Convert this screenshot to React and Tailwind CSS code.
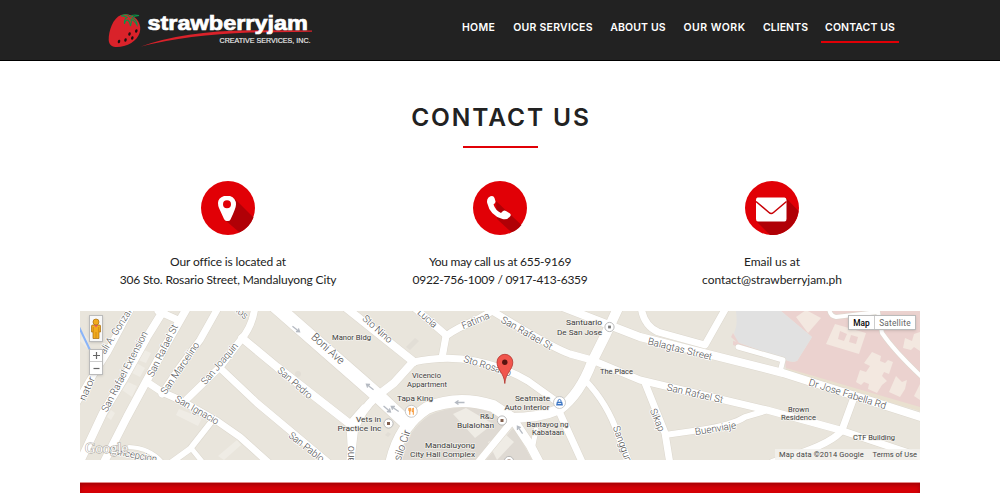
import React from "react";

const NAV = [
  { label: "HOME", box: "w-[43px]", track: "tracking-[0.3px]" },
  { label: "OUR SERVICES", box: "w-[88px]", track: "tracking-[0.25px]" },
  { label: "ABOUT US", box: "w-[64px]", track: "tracking-[0.15px]" },
  { label: "OUR WORK", box: "w-[71px]", track: "tracking-[0.5px]" },
  { label: "CLIENTS", box: "w-[53px]", track: "tracking-[0.05px]" },
  { label: "CONTACT US", box: "w-[78px]", track: "tracking-[0.1px]", active: true },
];

// [path, width]
const ROADS = [
  ["M131 308L107 353L90 380L76 404", 7],
  ["M165 308L147 337L123 380L103 413L79 464", 8],
  ["M187 308L167 343L147 380L127 417L103 464", 8],
  ["M158 311L178 320", 7],
  ["M218 308L200 340L180 367L162 394", 7],
  ["M255 306Q253 326 240 341L220 367L187 399", 7],
  ["M147 382L162 392L180 400L217 421L240 437L270 464", 7],
  ["M212 421L190 449L172 462", 6],
  ["M191 448L204 464", 5],
  ["M129 447Q150 448 162 462", 4],
  ["M242 338L277 367L350 424", 8],
  ["M220 368L257 403L330 464", 7],
  ["M272 303L360 380L377 395L408 424", 14],
  ["M340 303L414 362", 8],
  ["M410 304L446 335", 7],
  ["M446 336Q455 329 478 319L498 308", 7],
  ["M446 336L442 358", 7],
  ["M413 362Q447 355 475 361Q507 368 528 381L556 401", 7],
  ["M413 362L394 383L377 396Q361 410 354 430L350 464", 8],
  ["M364 408L350 424L352 464", 7],
  ["M484 306L522 329Q556 349 570 354L592 360L640 380L767 410L840 430L924 458", 7],
  ["M619 306L606 334L592 362Q580 394 560 409Q540 418 510 418", 10],
  ["M391 464Q399 426 427 408Q458 395 493 406L514 420", 12],
  ["M513 420L477 464", 7],
  ["M512 418L530 445L540 464", 9],
  ["M533 445L536 430", 5],
  ["M558 409L583 464", 7],
  ["M585 380Q608 404 618 435L630 464", 6],
  ["M560 306L640 337L783 373L924 418", 8],
  ["M641 306Q643 325 658 332L705 345L727 306", 7],
  ["M738 347L783 360L780 372", 5],
  ["M645 383L665 433L670 464", 7],
  ["M665 435L700 430Q733 425 745 417L765 411", 6],
  ["M853 400L842 430Q832 445 773 462", 7],
  ["M829 306Q829 316 836 317L878 312L882 333Q895 352 923 378", 4],
];

// [text, x1, y1, x2, y2, size] centre line from first to last letter
const STREETS = [
  ["ali A. Gonzal", 102, 353, 129, 310, 10],
  ["nator", 82, 400, 92, 377, 10],
  ["San Rafael Extension", 104, 411, 145, 332, 10],
  ["San Rafael St", 150, 376, 175, 325, 10],
  ["San Marcelino", 163, 393, 197, 343, 10],
  ["San Joaquin", 203, 383, 236, 344, 10],
  ["San Ignacio", 176, 398, 218, 422, 10],
  ["San Pedro", 279, 369, 311, 397, 10],
  ["San Pablo", 290, 434, 323, 460, 10],
  ["Boni Ave", 313, 335, 343, 362, 11.5],
  ["rios", 235, 307, 247, 317, 10],
  ["Concepcion", 109, 450, 157, 459, 10],
  ["Sto Nino", 364, 317, 391, 341, 10],
  ["Lucia", 419, 311, 436, 326, 10],
  ["Fatima", 462, 326, 489, 315, 10],
  ["San Rafael St", 502, 319, 552, 347, 10],
  ["Sto Rosario", 464, 358.5, 511, 373, 10],
  ["osilo Cir", 395, 466, 407, 430, 11],
  ["ano", 351, 463, 351, 446, 10],
  ["Sanggun", 616, 426, 629, 462, 10],
  ["Balagtas Street", 648, 341, 712, 357, 10],
  ["San Rafael St", 667, 387, 723, 400, 10],
  ["Sikap", 653, 409, 662, 431, 10],
  ["Buenviaje", 695, 432, 736, 425, 10],
  ["Dr Jose Fabella Rd", 809, 382, 886, 406, 10],
];

// [text, x, baseline, width]
const PLACES = [
  ["Manor Bldg", 332, 340, 39],
  ["Vicencio", 412, 378, 29],
  ["Appartment", 407, 386.5, 40],
  ["Tapa King", 397, 401, 36],
  ["Vets in", 356, 422, 25],
  ["Practice Inc", 337.5, 431, 44],
  ["R&J", 480, 419, 14],
  ["Bulalohan", 457, 427.5, 37],
  ["Mandaluyong", 425, 447.5, 50],
  ["City Hall Complex", 410, 456.5, 65],
  ["Seatmate", 515, 400.5, 35],
  ["Auto Interior", 504.5, 409.5, 45],
  ["Bantayog ng", 526.5, 427, 42],
  ["Kabataan", 532, 435, 32],
  ["Santuario", 566, 325, 36],
  ["De San Jose", 557, 335, 45],
  ["The Place", 600, 373.5, 33],
  ["Brown", 788, 411.5, 21],
  ["Residence", 781, 420, 35],
  ["CTF Building", 853, 440, 42],
];

function Street({ item }) {
  const [text, x1, y1, x2, y2, size] = item;
  const angle = (Math.atan2(y2 - y1, x2 - x1) * 180) / Math.PI;
  const length = Math.hypot(x2 - x1, y2 - y1);
  return (
    <text
      transform={`translate(${x1} ${y1}) rotate(${angle})`}
      y={size * 0.34}
      fontSize={size}
      textLength={length}
      lengthAdjust="spacingAndGlyphs"
    >
      {text}
    </text>
  );
}

function Poi({ x, y, children }) {
  return (
    <g transform={`translate(${x} ${y})`}>
      <circle r="4.6" fill="#fff" stroke="#aaa" strokeWidth=".8" />
      {children || <rect x="-1.5" y="-1.5" width="3" height="3" fill="#83614f" />}
    </g>
  );
}

function Arrow({ x, y, angle }) {
  return (
    <path
      transform={`translate(${x} ${y}) rotate(${angle})`}
      d="M-4.5 0H4M1.5 -2L4.5 0L1.5 2"
      fill="none"
      stroke="#b5bac2"
      strokeWidth="1.3"
    />
  );
}

function StreetMap() {
  return (
    <svg className="block h-full w-full" viewBox="80 311 840 149" fontFamily="Roboto, sans-serif">
      <rect x="80" y="311" width="840" height="149" fill="#e9e5dc" />
      <path d="M734 311H920V409L786 371L785 360L733 345Z" fill="#ebd2cf" />
      <path d="M731 311H781L812 337L797 361Q790 363 784 359L731 340Z" fill="#e9e5dc" />
      <path d="M736 311H781L812 337L797 361Q790 363 784 359L737 342L734 333Q738 325 736 311Z" fill="#e1e1e1" />
      <path d="M733 333L731 337L740 345Z" fill="#ebd2cf" />
      <path d="M400 460Q407 430 430 415Q460 402 489 411L509 422L475 460Z" fill="#dfdad3" />
      <path d="M514 427L486 460H532Z" fill="#dfdad3" />
      <g fill="#efece5">
        <path d="M453 414L466 408L493 424L475 438Z" />
        <path d="M488 442L505 434L514 442L497 460Z" />
        <path d="M142 349L151 353L146 363L138 360Z" />
        <path d="M133 361L145 368L140 377L128 371Z" />
        <path d="M128 382L137 386L132 397L122 390Z" />
        <path d="M111 410L115 413L111 420L107 417Z" />
        <path d="M179 409L202 418L198 426L176 415Z" />
        <path d="M218 456L237 440L241 445L224 460Z" />
        <path d="M83 333L89 339L87 348L80 341Z" />
      </g>
      <g fill="#f3e8e0">
        <path d="M796 317L806 310L821 318L808 333Z" />
        <path fillRule="evenodd" d="M835 324L866 333L859 354L826 344ZM840 331L838 339L844 341L847 334ZM851 335L849 342L856 344L858 337Z" />
        <path d="M872 352L881 356L880 361L885 363L888 360L893 362L889 374L884 372L882 376L887 381L882 385L877 393L868 389L869 384L864 382L861 385L856 382L860 370L866 372L870 366L864 363Z" />
        <path d="M896 376L902 382L907 380L905 389L900 397L889 392Z" />
        <path d="M905 338L912 341L914 334L920 332V351L914 347L911 350L903 348Z" />
        <path d="M920 384V400L914 396Z" />
        <path d="M786 368L920 407V411L786 373Z" fill="#e9e0cf" />
      </g>
      <g fill="#e2ded6">
        <path d="M415 338L419 341L410 350L406 347Z" />
        <circle cx="298" cy="374" r="3" />
        <path d="M388 432L391 434L388 437L385 435Z" />
      </g>
      <path d="M79 327L90 350" stroke="#8ab4f8" strokeWidth="2" />
      <g fill="none" strokeLinejoin="round" strokeLinecap="round">
        {ROADS.map(([d, w]) => (
          <path key={d} d={d} stroke="#dcd7cd" strokeWidth={w + 1} />
        ))}
        {ROADS.map(([d, w]) => (
          <path key={d} d={d} stroke="#fff" strokeWidth={w} />
        ))}
      </g>
      <Arrow x={296} y={329} angle={38} />
      <Arrow x={370} y={387} angle={218} />
      <Arrow x={387} y={409} angle={40} />
      <Arrow x={395} y={409} angle={215} />
      <Arrow x={460} y={402.5} angle={180} />
      <Arrow x={520} y={430} angle={235} />
      <g fill="#4c4c4c" fontWeight="300" stroke="#fff" strokeWidth="1.6" paintOrder="stroke" strokeLinejoin="round">
        {STREETS.map((item) => (
          <Street key={item[0] + item[1]} item={item} />
        ))}
      </g>
      <g fill="#3c3c3c" stroke="#f4f2ed" strokeWidth="1.4" paintOrder="stroke" strokeLinejoin="round" fontSize="8" fontWeight="400">
        {PLACES.map(([text, x, y, w]) => (
          <text key={text} x={x} y={y} textLength={w} lengthAdjust="spacingAndGlyphs">
            {text}
          </text>
        ))}
      </g>
      <Poi x={388.5} y={423.5} />
      <Poi x={502} y={420.5} />
      <Poi x={509} y={461} />
      <Poi x={609.5} y={327}>
        <rect x="-1.4" y="-1.4" width="2.8" height="2.8" fill="#777" />
      </Poi>
      <g transform="translate(411.3 411.3)">
        <circle r="6" fill="#fff" stroke="#bbb" strokeWidth=".8" />
        <path d="M-2.4 -3.4V-1Q-2.4 0 -1.5 0V3.5M-.6 -3.4V-1Q-.6 0 -1.5 0M-1.5 -3.4V0M2 3.5V-3.4Q.8 -2.5 .8 .3H2" fill="none" stroke="#f58b1f" strokeWidth=".9" />
      </g>
      <g transform="translate(559.5 402.5)">
        <circle r="6" fill="#fff" stroke="#bbb" strokeWidth=".8" />
        <path d="M-2.7 -.8H2.7L3.4 3H-3.4Z" fill="#3b75c4" />
        <path d="M-1.5 -.6V-2.2Q0 -4 1.5 -2.2V-.6M-1.5 1H1.5" fill="none" stroke="#3b75c4" strokeWidth="1" />
        <path d="M-1.7 1H1.7" stroke="#fff" strokeWidth=".8" />
      </g>
      <path d="M504.800 383.500C504.300 373 497 370 497 362.200A7.900 7.900 0 0 1 512.800 362.200C512.800 370 505.400 373 504.800 383.500Z" fill="#f1554c" stroke="#b3332d" strokeWidth=".8" />
      <circle cx="504.800" cy="362.300" r="2.700" fill="#581410" />
      <text x="85" y="453" fontFamily="Liberation Serif, serif" fontSize="14" fill="#fff" stroke="#aaa69e" strokeWidth="1" paintOrder="stroke" textLength="43" lengthAdjust="spacingAndGlyphs">
        Google
      </text>
    </svg>
  );
}

function Pegman() {
  return (
    <svg className="h-[22px] w-[12px]" viewBox="0 0 12 22">
      <path d="M2.500 7H9.500Q10.500 7 10.500 8V14H9V20.500H3V14H1.500V8Q1.500 7 2.500 7Z" fill="#f2ab1d" stroke="#a66a0c" strokeWidth=".7" />
      <path d="M6 14V20M3.300 9V14M8.700 9V14" stroke="#b97410" strokeWidth=".6" />
      <path d="M4 7H8L6 9.500Z" fill="#e8596a" />
      <circle cx="6" cy="4" r="3" fill="#f2ab1d" stroke="#a66a0c" strokeWidth=".7" />
    </svg>
  );
}

function Logo() {
  return (
    <svg className="h-[61px] w-[212px]" viewBox="104 0 212 61" fontFamily="Liberation Sans, sans-serif">
      <path d="M121 15C129 12 139 17 140.200 27C141 35 135 43 124 46C117 48 109 48 108.700 40C108.500 31 113 18 121 15Z" fill="#d9222a" />
      <path d="M121 16Q127 12.500 130 17Q132 14 139 15.500Q134 16 132 18Q137 20 137 25Q134 20 131 19.500Q132 22 130.500 26Q130 22 128 20Q125 20 124.500 24Q124 19 127 17.500Q124 15.500 121 16Z" fill="none" stroke="#0b9447" strokeWidth="1.100" />
      <g fill="#1b1012">
        <ellipse cx="136.300" cy="31" rx="1.200" ry="1.800" transform="rotate(20 136.300 31)" />
        <ellipse cx="129.500" cy="34" rx="1.200" ry="1.800" transform="rotate(20 129.500 34)" />
        <ellipse cx="132.300" cy="38" rx="1.200" ry="1.800" transform="rotate(20 132.300 38)" />
        <ellipse cx="125.500" cy="40" rx="1.200" ry="1.800" transform="rotate(20 125.500 40)" />
        <ellipse cx="119" cy="41.500" rx="1.200" ry="1.800" transform="rotate(20 119 41.500)" />
      </g>
      <path d="M141 46.500Q183 31 250 30.200L312 30.500V31.800L250 32.500Q188 34.500 141 46.500Z" fill="#d9222a" />
      <text x="147.500" y="30" fontSize="20.500" fontWeight="700" fill="#fff" stroke="#fff" strokeWidth=".7" textLength="160.500" lengthAdjust="spacingAndGlyphs">
        strawberryjam
      </text>
      <text x="219.500" y="43" fontSize="7" fill="#eee" stroke="#eee" strokeWidth=".15" textLength="91" lengthAdjust="spacingAndGlyphs">
        CREATIVE SERVICES, INC.
      </text>
    </svg>
  );
}

function PinIcon() {
  return (
    <svg className="size-[54px]" viewBox="0 0 54 54">
      <circle cx="27" cy="27" r="27" fill="#e10006" />
      <path d="M34 18L52.500 36.500A27 27 0 0 1 38.500 51.500L24 39Z" fill="#b00006" />
      <path fillRule="evenodd" d="M23 15H29Q35 17 35 23.500Q35 27 29.500 38.500Q28.700 40 27 40H25.500Q24 40 23 38L18 27Q17 24.500 17 22Q17 17 23 15ZM26 19.300A4 4 0 1 0 26 27.300A4 4 0 1 0 26 19.300Z" fill="#fff" />
    </svg>
  );
}

function PhoneIcon() {
  return (
    <svg className="size-[54px]" viewBox="0 0 54 54">
      <circle cx="27" cy="27" r="27" fill="#e10006" />
      <path d="M23 20L48.500 44Q44 49.500 38.500 51.300L24 38Z" fill="#b00006" />
      <path d="M15.500 16.500Q20 13.500 21.500 17L22.500 20.500Q22.800 22 20.500 23.500Q22.500 29.500 28 32L30 30Q31.500 29 33 30L37 32.500Q38.500 34 37 35.500Q34.500 39 29.500 38Q17 34.500 14.200 22Q13.500 18.500 15.500 16.500Z" fill="#fff" />
    </svg>
  );
}

function MailIcon() {
  return (
    <svg className="size-[54px]" viewBox="0 0 54 54">
      <circle cx="27" cy="27" r="27" fill="#e10006" />
      <path d="M41 17L53.500 30A27 27 0 0 1 25 54L12 41Z" fill="#b00006" />
      <path d="M12.500 16.500H39.500Q41.500 16.500 41.500 19V38Q41.500 40.500 39.500 40.500H13Q11 40.500 11 38V19Q11 16.500 12.500 16.500Z" fill="#fff" />
      <path d="M11 20.500L24 31.500Q26.200 33.500 28.500 31.500L41.500 20.500" fill="none" stroke="#c80006" strokeWidth="1.500" />
    </svg>
  );
}

const CONTACTS = [
  { Icon: PinIcon, track: "tracking-[-0.15px]", lines: ["Our office is located at", "306 Sto. Rosario Street, Mandaluyong City"] },
  { Icon: PhoneIcon, track: "tracking-[-0.26px]", lines: ["You may call us at 655-9169", "0922-756-1009 / 0917-413-6359"] },
  { Icon: MailIcon, track: "tracking-[-0.07px]", lines: ["Email us at", "contact@strawberryjam.ph"] },
];

export default function App() {
  return (
    <div className="flex h-[493px] w-[1000px] flex-col overflow-hidden bg-white">
      <header className="flex h-[61px] shrink-0 items-start justify-between border-b border-black bg-[#222] pl-[104px] pr-[101px]">
        <Logo />
        <nav className="flex gap-[9px] pt-[14px] font-[Inter,sans-serif] text-[10.5px] font-semibold leading-[27px] text-white">
          {NAV.map((item) => (
            <a
              key={item.label}
              className={`${item.box} ${item.track} whitespace-nowrap border-b-2 text-center ${item.active ? "border-[#e10006]" : "border-transparent"}`}
            >
              {item.label}
            </a>
          ))}
        </nav>
      </header>

      <main className="mx-auto flex w-[840px] flex-col">
        <div className="flex flex-col items-center pt-[38px]">
          <h1 className="pl-[2px] font-[Inter,sans-serif] text-[24.5px] font-semibold leading-[36px] tracking-[1.9px] text-[#222]">CONTACT US</h1>
          <div className="mt-[11px] h-[2px] w-[75px] bg-[#e10006]" />
        </div>

        <section className="mt-[33px] flex justify-between px-[12px]">
          {CONTACTS.map(({ Icon, track, lines }) => (
            <div key={lines[0]} className="flex w-[272px] flex-col items-center">
              <Icon />
              <div className={`mt-[18px] text-center font-[Lato,sans-serif] text-[12px] leading-[18px] text-[#222] ${track}`}>
                {lines.map((line) => (
                  <p key={line} className="whitespace-nowrap">{line}</p>
                ))}
              </div>
            </div>
          ))}
        </section>

        <section className="relative mt-[22px] h-[149px] w-full overflow-hidden">
          <StreetMap />
          <div className="absolute left-[9px] top-[4px] flex h-[27px] w-[14px] items-center justify-center border border-[#bbb] bg-[#f8f8f8] shadow-sm">
            <Pegman />
          </div>
          <div className="absolute left-[9px] top-[38px] flex w-[14px] flex-col border border-[#bbb] bg-white shadow-sm">
            <span className="flex h-[12px] items-center justify-center border-b border-[#ccc]">
              <svg className="size-[7px]" viewBox="0 0 7 7"><path d="M0 3.500H7M3.500 0V7" stroke="#666" strokeWidth="1.200" /></svg>
            </span>
            <span className="flex h-[12px] items-center justify-center">
              <svg className="size-[7px]" viewBox="0 0 7 7"><path d="M0.500 3.500H6.500" stroke="#666" strokeWidth="1.200" /></svg>
            </span>
          </div>
          <div className="absolute right-[4px] top-[4px] flex h-[15px] border border-[#bbb] bg-white font-[Roboto,sans-serif] text-[8.3px] leading-[14px] shadow-sm">
            <span className="w-[26px] border-r border-[#ccc] text-center font-medium text-black">Map</span>
            <span className="w-[40px] text-center tracking-[0.2px] text-[#666]">Satellite</span>
          </div>
          <div className="absolute bottom-0 right-0 flex h-[11px] w-[145px] justify-between bg-[#f3f1ed]/80 pl-[4px] pr-[3px] font-[Roboto,sans-serif] text-[7.5px] leading-[12px] text-[#444]">
            <span className="tracking-[0.15px]">Map data ©2014 Google</span>
            <span>Terms of Use</span>
          </div>
        </section>

        <div className="mt-[22px] h-[12px] border-t border-[#e28a88] bg-[#d60006] shadow-[inset_0_2px_4px_#a00004]" />
      </main>
    </div>
  );
}
